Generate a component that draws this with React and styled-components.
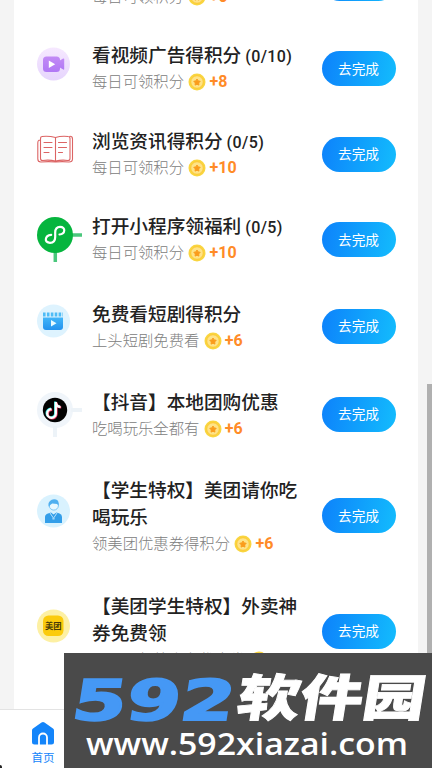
import React from 'react';
import styled, { createGlobalStyle } from 'styled-components';

const Global = createGlobalStyle`
  * { box-sizing: border-box; }
  body { margin: 0; overflow: hidden; background: #f4f4f4; font-family: Roboto, "Noto Sans CJK SC", sans-serif; }
`;

const Screen = styled.div`
  position: relative;
  height: 768px;
  overflow: hidden;
  display: flex;
  flex-direction: column;
  background: #f4f4f4;
`;

const Card = styled.main`
  height: 709px;
  margin: 0 14px;
  background: #fff;
  overflow: hidden;
  display: flex;
  flex-direction: column;
  justify-content: flex-end;
  padding-bottom: 20px;
`;

const Row = styled.section`
  flex: none;
  height: ${(p) => p.$height}px;
  display: grid;
  grid-template-columns: 55px 229.5px 74px;
  padding-left: 23px;
  align-items: center;
`;

const IconCell = styled.div`
  width: 46px;
  height: 46px;
  svg { display: block; overflow: visible; }
`;

const Texts = styled.div`
  padding-top: ${(p) => p.$shift}px;
  width: 212px;
`;

const Title = styled.h2`
  margin: 0;
  font-size: 18.67px;
  line-height: 27px;
  font-weight: 500;
  color: #222;
  white-space: pre-line;
`;

const Count = styled.span`
  font-size: 16px;
  font-weight: 500;
  letter-spacing: 0.4px;
  margin-left: 4px;
`;

const Detail = styled.div`
  display: flex;
  align-items: center;
  height: 24px;
  font-size: 15.33px;
  font-weight: 300;
  line-height: 22px;
  color: #808080;
  white-space: nowrap;
  svg { margin: 0 3px 0 4.5px; }
`;

const Points = styled.b`
  font-size: 16px;
  font-weight: 700;
  color: #ff8b27;
`;

const Action = styled.button`
  width: 74px;
  height: 35px;
  padding: 0 0 2px;
  border: 0;
  border-radius: 18px;
  color: #fff;
  background: linear-gradient(100deg, #0d82fb, #13bcfd);
  font: 400 13.7px Roboto, "Noto Sans CJK SC", sans-serif;
`;

const TabBar = styled.nav`
  height: 59px;
  display: flex;
  background: #fff;
  border-top: 1px solid #e3e3e3;
`;

const Tab = styled.div`
  width: 86px;
  padding-top: 12px;
  display: flex;
  flex-direction: column;
  align-items: center;
  color: #1485fa;
  font-size: 11.5px;
  line-height: 17px;
  svg { margin-bottom: 5px; }
`;

const Scrollbar = styled.div`
  position: absolute;
  right: 0;
  top: 384px;
  width: 5px;
  height: 300px;
  background: #b0b0b0;
`;

const Watermark = styled.aside`
  position: absolute;
  right: 0;
  bottom: 0;
  width: 368px;
  height: 115px;
  background: #4a4a4a;
  svg { display: block; }
`;

const CornerMark = styled.i`
  position: absolute;
  left: 0;
  bottom: 0;
  width: 2px;
  height: 3px;
  background: #222;
  border-radius: 0 2px 0 0;
`;

const Coin = () => (
  <svg width="18" height="18" viewBox="0 0 18 18">
    <circle cx="9" cy="9" r="8.5" fill="#f9d53f" />
    <circle cx="9" cy="9" r="6.3" fill="#fee387" stroke="#fdc832" />
    <path d="M9 6l1 1.900 2.200.4-1.500 1.600.2 2.200L9 11.200l-1.900.9.2-2.200-1.500-1.600 2.200-.4z" fill="#fa9c1c" stroke="#fa9c1c" strokeWidth="1" strokeLinejoin="round" />
  </svg>
);

const VideoIcon = () => (
  <svg width="46" height="46">
    <defs>
      <linearGradient id="halo" x2="0" y2="1"><stop stopColor="#f6e8ff" /><stop offset="1" stopColor="#e6d5fd" /></linearGradient>
      <linearGradient id="camera" x2="0" y2="1"><stop stopColor="#c28af5" /><stop offset="1" stopColor="#b078f5" /></linearGradient>
    </defs>
    <circle cx="16.500" cy="18" r="16.500" fill="url(#halo)" />
    <rect x="6" y="10.500" width="17" height="15.500" rx="3.500" fill="url(#camera)" />
    <path d="M22 15l4.200-2.500q1-.4 1 1v9.500q0 1-1 .6L22 21z" fill="url(#camera)" />
    <path d="M11.800 14.500v7.500l6.400-3.800z" fill="#fff" />
  </svg>
);

const BookIcon = () => (
  <svg width="46" height="46" fill="none" stroke="#dc6464" strokeWidth="1.100" strokeLinecap="round">
    <path d="M18.500 6.500Q12 4.800 5 5.500Q3.500 5.500 3.500 8V27.500q0 2 2 2Q12 28.500 18.500 30Q25 28.500 31 29.500q2 0 2-2V7.500q0-2-2-2Q24 4.800 18.500 6.500zV30M3 9Q.8 9 .8 12V28q0 3 3 3Q12 30.300 18.500 31Q25 30.300 32 31q3.500 0 3.500-3V8q0-2.700-2.500-2.700" />
    <path d="M7 11.500h8M7 16.500h8M7 21.500h5M21.500 11.500h8M21.500 16.500h8M21.500 21.500h4" />
  </svg>
);

const MiniIcon = () => (
  <svg width="46" height="46">
    <path d="M34 18h11M18.300 35v10" stroke="#4ac77c" strokeWidth="3.500" />
    <circle cx="18" cy="18" r="18" fill="#06b53e" />
    <path d="M14.200 17.800C7.500 18.500 7 25.800 13 25.800C17 25.800 18.200 23 18.200 20V15.500C18.200 11.500 20 9.800 23 9.800C29 9.800 28.500 17 22.500 17.500" fill="none" stroke="#fff" strokeWidth="2.200" strokeLinecap="round" />
  </svg>
);

const DramaIcon = () => (
  <svg width="46" height="46">
    <defs><linearGradient id="film" x2="0" y2="1"><stop stopColor="#42b6f9" /><stop offset="1" stopColor="#2492ee" /></linearGradient></defs>
    <circle cx="16.500" cy="18" r="16.500" fill="#def3fe" />
    <path d="M6 11.500h20" stroke="#4ebcf6" strokeWidth="4" strokeDasharray="2.600 1.300" />
    <path d="M6 14.500h20v9.500q0 3-3 3H9q-3 0-3-3z" fill="url(#film)" />
    <path d="M14 17v6.500l5.500-3.200z" fill="#e8fbff" />
  </svg>
);

const noteShape = 'M18.800 10V21.500A4.300 4.300 0 1 1 14.500 17.200M18.800 10.300Q19.300 14.800 23.500 14.800';
const DouyinIcon = () => (
  <svg width="46" height="46">
    <circle cx="18" cy="19" r="18" fill="#f0f5fa" />
    <path d="M34 19h11M18 35v11" stroke="#edf3f8" strokeWidth="4" />
    <circle cx="18" cy="19" r="12.200" fill="#020202" />
    <g fill="none" strokeWidth="2.300" transform="translate(0 1)">
      <path d={noteShape} stroke="#32e5df" transform="translate(-.6 -.5)" />
      <path d={noteShape} stroke="#f33b66" transform="translate(.7 .6)" />
      <path d={noteShape} stroke="#fff" />
    </g>
  </svg>
);

const StudentIcon = () => (
  <svg width="46" height="46">
    <circle cx="16.500" cy="18" r="16.500" fill="#d9f2fe" />
    <circle cx="16.800" cy="12.500" r="4.600" fill="#e9f8ff" stroke="#69bdf2" strokeWidth=".8" />
    <path d="M12 14q-1.500-4 1-6 2-2.300 6-1.500 3.500 1 2.500 6.500l-1.300-2-5-.6-2 1.600z" fill="#4faff0" />
    <path d="M8 30v-6q0-2.500 3-3.500l3-1 2.500 2 3-2 3 1q2.500.8 2.500 3.500v6z" fill="#339ee9" />
    <path d="M13 20l3 4.500v2M20 20l-3 4.500v2" stroke="#dcf4ff" strokeWidth=".8" fill="none" />
  </svg>
);

const IconLabel = styled.text`
  font: 700 8.300px "Noto Sans CJK SC", sans-serif;
  fill: #463a09;
`;

const MeituanIcon = () => (
  <svg width="46" height="46">
    <circle cx="16.500" cy="18" r="16.500" fill="#fdf0a3" />
    <rect x="6" y="7.500" width="20.500" height="20.500" rx="5.500" fill="#fbcb0d" />
    <IconLabel x="8" y="20.800">美团</IconLabel>
  </svg>
);

const BrandNumber = styled.text`
  font: 700 56px "DejaVu Sans", sans-serif;
  fill: #4598f5;
  stroke: #4598f5;
  stroke-width: 2px;
  stroke-linejoin: miter;
`;
const BrandName = styled.text`
  font: 900 58px "Noto Sans CJK SC", sans-serif;
  fill: #fff;
  stroke: #fff;
  stroke-width: 1px;
`;
const SiteName = styled.text`
  font: 600 31px "Open Sans", sans-serif;
  fill: #fff;
`;

const tasks = [
  { height: 86, title: '看新闻得积分', detail: '每日可领积分', points: 6, icon: VideoIcon, count: '0/5' },
  { height: 85, title: '看视频广告得积分', detail: '每日可领积分', points: 8, icon: VideoIcon, count: '0/10' },
  { height: 86, title: '浏览资讯得积分', detail: '每日可领积分', points: 10, icon: BookIcon, count: '0/5' },
  { height: 85, title: '打开小程序领福利', detail: '每日可领积分', points: 10, icon: MiniIcon, count: '0/5' },
  { height: 88, title: '免费看短剧得积分', detail: '上头短剧免费看', points: 6, icon: DramaIcon, shift: 3 },
  { height: 88, title: '【抖音】本地团购优惠', detail: '吃喝玩乐全都有', points: 6, icon: DouyinIcon, shift: 3 },
  { height: 115, title: '【学生特权】美团请你吃\n喝玩乐', detail: '领美团优惠券得积分', points: 6, icon: StudentIcon, shift: 3 },
  { height: 116, title: '【美团学生特权】外卖神\n券免费领', detail: '一日三餐外卖有优惠券', points: 6, icon: MeituanIcon, shift: 3 },
];

function Task({ task }) {
  const Icon = task.icon;
  return (
    <Row $height={task.height}>
      <IconCell><Icon /></IconCell>
      <Texts $shift={task.shift || 0}>
        <Title>{task.title}{task.count && <Count>({task.count})</Count>}</Title>
        <Detail><span>{task.detail}</span><Coin /><Points>+{task.points}</Points></Detail>
      </Texts>
      <Action>去完成</Action>
    </Row>
  );
}

export default function App() {
  return (
    <>
      <Global />
      <Screen>
        <Card>{tasks.map((task) => <Task key={task.title} task={task} />)}</Card>
        <TabBar>
          <Tab>
            <svg width="22" height="23" viewBox="0 0 22 23">
              <path d="M9.500.5q1.500-1 3 0L21 6.500q1 .7 1 2V20q0 2.500-2.500 2.500h-17Q0 22.500 0 20V8.500q0-1.300 1-2z" fill="#1485fa" />
              <path d="M7 23v-7.500a4 4 0 0 1 8 0V23" fill="none" stroke="#fff" strokeWidth="1.800" />
            </svg>
            首页
          </Tab>
        </TabBar>
        <Scrollbar />
        <CornerMark />
        <Watermark>
          <svg width="368" height="115">
            <BrandNumber transform="translate(6 67) skewX(-9)" textLength="162" lengthAdjust="spacingAndGlyphs">592</BrandNumber>
            <BrandName transform="translate(171 63) skewX(-9) scale(1 .86)" textLength="188" lengthAdjust="spacingAndGlyphs">软件园</BrandName>
            <SiteName x="22" y="102" textLength="322" lengthAdjust="spacingAndGlyphs">www.592xiazai.com</SiteName>
          </svg>
        </Watermark>
      </Screen>
    </>
  );
}
